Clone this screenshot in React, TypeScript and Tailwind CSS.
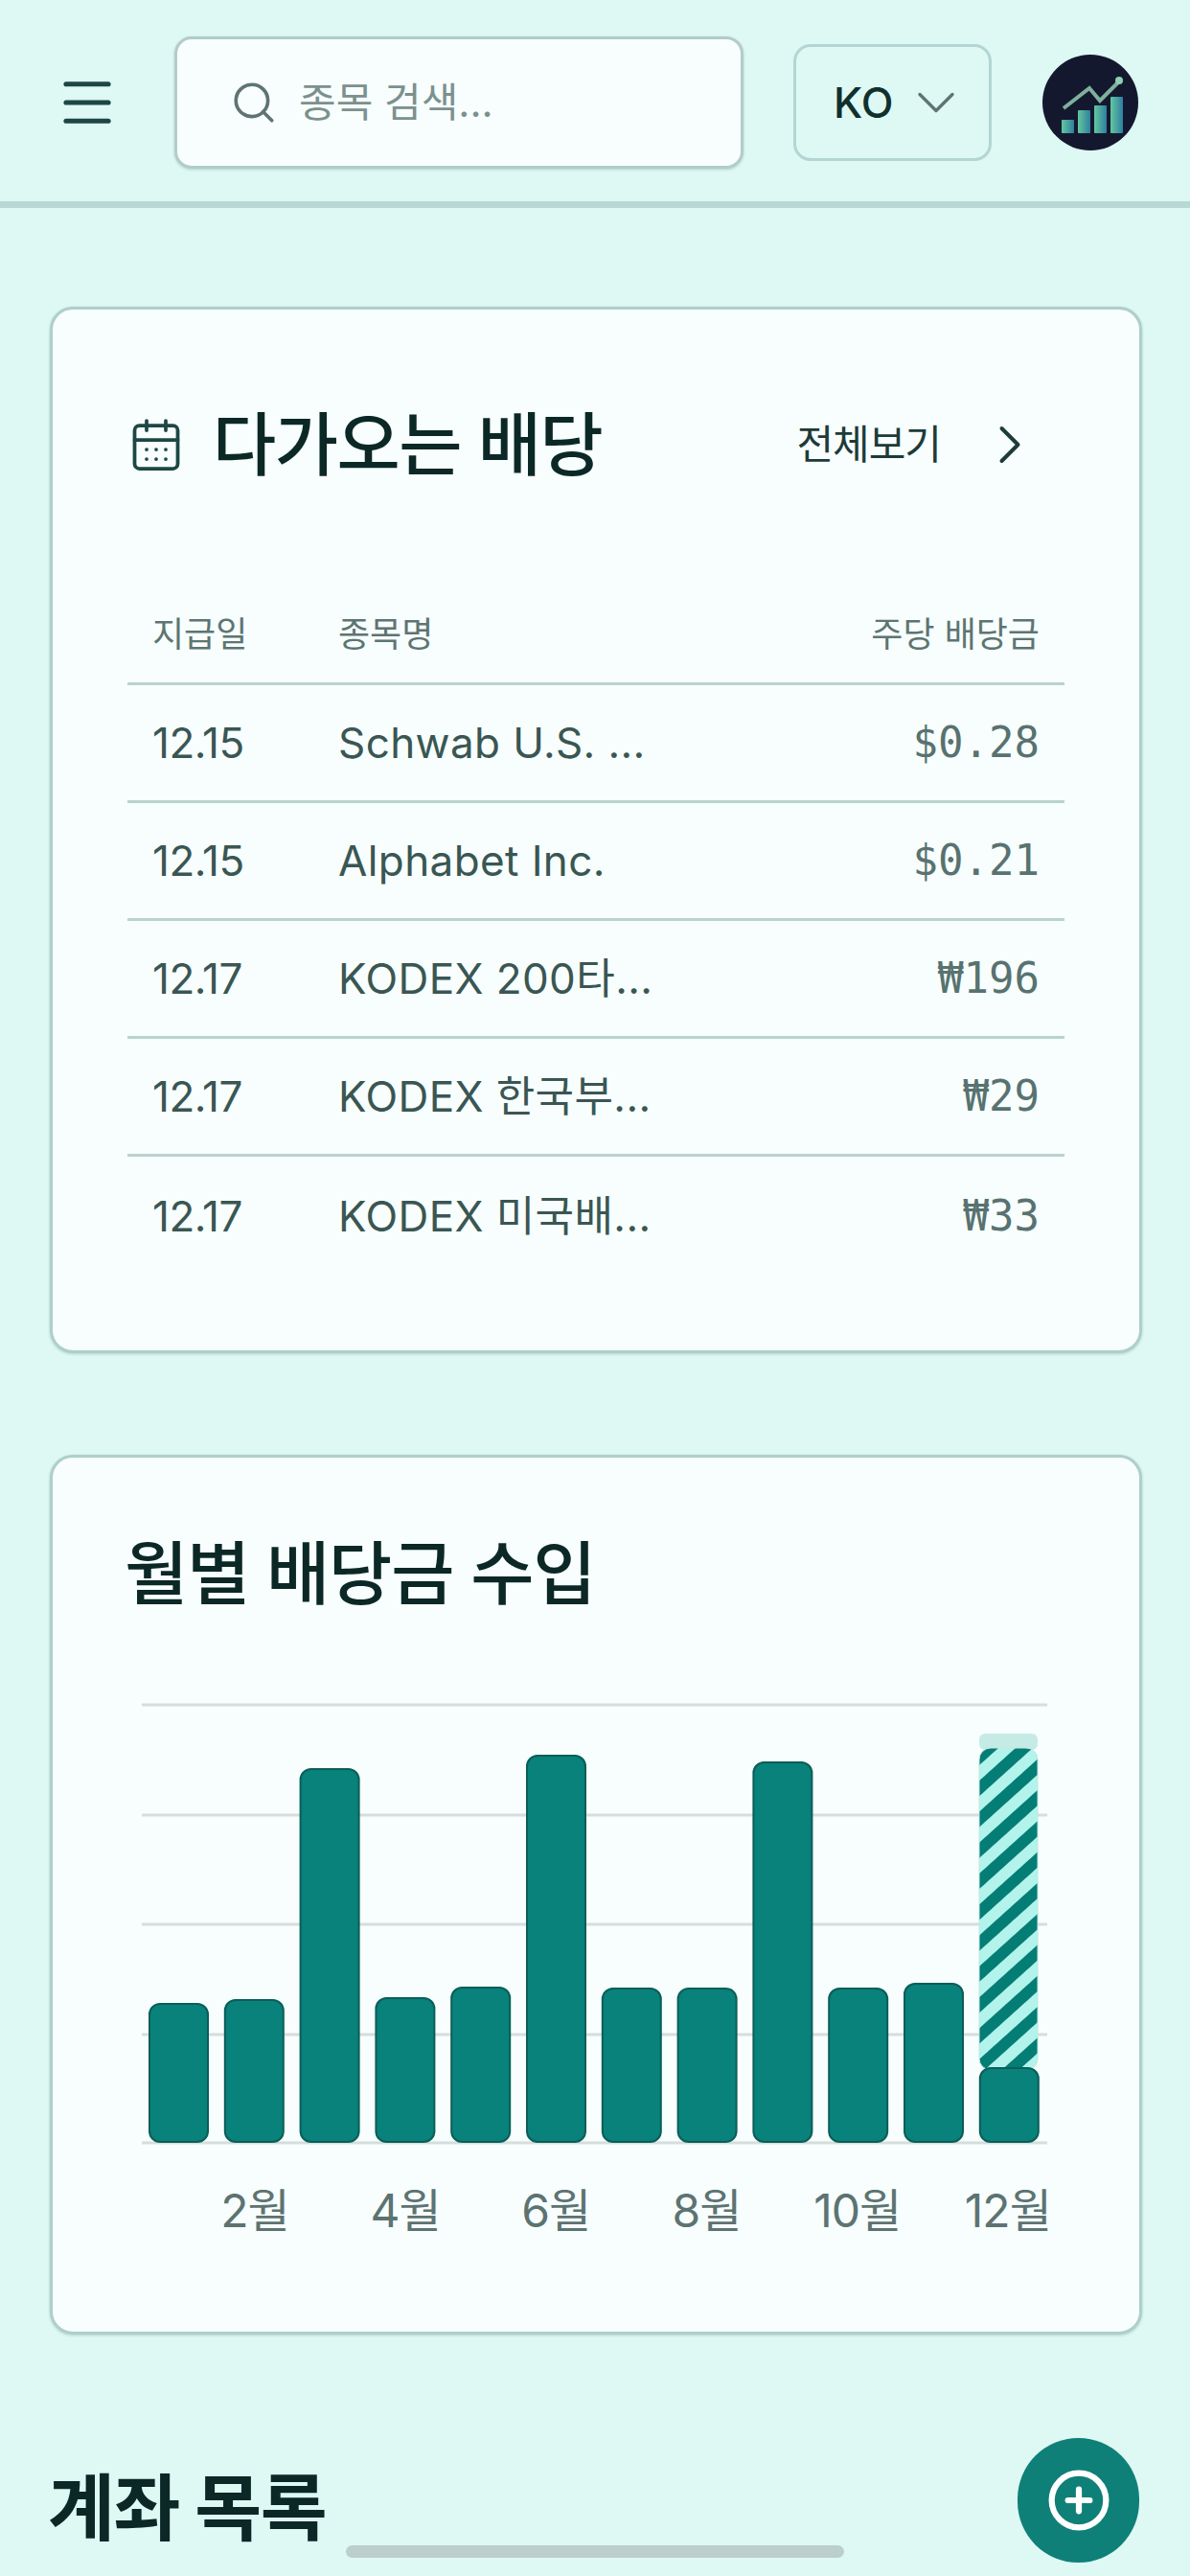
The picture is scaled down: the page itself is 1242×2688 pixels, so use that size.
import React from 'react';
import { CalendarDays, ChevronDown, ChevronRight, CirclePlus, Menu, Search } from 'lucide-react';

interface Dividend {
  date: string;
  name: string;
  amount: string;
}

const dividends: Dividend[] = [
  { date: '12.15', name: 'Schwab U.S. ...', amount: '$0.28' },
  { date: '12.15', name: 'Alphabet Inc.', amount: '$0.21' },
  { date: '12.17', name: 'KODEX 200타...', amount: '₩196' },
  { date: '12.17', name: 'KODEX 한국부...', amount: '₩29' },
  { date: '12.17', name: 'KODEX 미국배...', amount: '₩33' },
];

// bar tops in page pixels, bars all end on the same baseline
const barTops = [2090, 2086, 1845, 2084, 2073, 1831, 2074, 2074, 1838, 2074, 2069, 2157];
const gridLines = [1778, 1893, 2007, 2122, 2235];
const months = ['', '2월', '', '4월', '', '6월', '', '8월', '', '10월', '', '12월'];

const Logo: React.FC = () => (
  <svg viewBox="0 0 100 100" className="w-[100px] h-[102px]">
    <defs>
      <linearGradient id="logoBars" x1="0" x2="1" y1="0" y2="0">
        <stop offset="0" stopColor="#63c79e" />
        <stop offset="1" stopColor="#2f7fa0" />
      </linearGradient>
    </defs>
    <circle cx="50" cy="50" r="50" fill="#14182e" />
    <path d="M22 56 L49 35 L60 48 L79 29" fill="none" stroke="#7fb09c" strokeWidth="4" />
    <circle cx="80" cy="27" r="4" fill="#8fd0b4" />
    <g fill="url(#logoBars)">
      <rect x="20" y="68" width="13" height="14" rx="1" />
      <rect x="37" y="58" width="13" height="24" rx="1" />
      <rect x="54" y="53" width="13" height="29" rx="1" />
      <rect x="71" y="44" width="13" height="38" rx="1" />
    </g>
  </svg>
);

const DividendChart: React.FC = () => (
  <svg viewBox="133 1760 976 490" className="w-[976px] h-[490px] block">
    <defs>
      <pattern id="stripes" patternUnits="userSpaceOnUse" width="24" height="24" patternTransform="rotate(-42)">
        <rect width="24" height="24" fill="#b2f3eb" />
        <rect width="24" height="12" fill="#047d75" />
      </pattern>
    </defs>
    {gridLines.map((y) => (
      <line key={y} x1="148" x2="1093" y1={y} y2={y} stroke="#d5dedc" strokeWidth="3" />
    ))}
    <rect x="1022" y="1808" width="61" height="17" rx="6" fill="#c6ebe6" />
    <rect x="1022" y="1823" width="61" height="336" rx="12" fill="url(#stripes)" stroke="#c0e8e3" strokeWidth="1" />
    {barTops.map((top, i) => (
      <rect
        key={i}
        x={156 + i * 78.8}
        y={top}
        width="61"
        height={2234 - top}
        rx="11"
        fill="#08827a"
        stroke="#0a5e59"
        strokeWidth="2"
      />
    ))}
  </svg>
);

const App: React.FC = () => {
  return (
    <div className="relative w-[1242px] h-[2688px] overflow-hidden bg-[#def8f4] font-['Inter','Noto_Sans_CJK_KR',sans-serif] text-[#10302d]">
      <header className="h-[217px] flex items-center pl-[58px] pr-[54px] pt-[3px] border-b-[7px] border-[#b7d8d4]">
        <Menu className="w-[66px] h-[66px] text-[#1d4744] mr-[58px]" strokeWidth={1.9} />
        <div className="w-[594px] h-[138px] flex items-center pl-[55px] bg-[#f8fefd] border-[3px] border-[#b2ccc9] shadow-[0_1px_3px_rgba(0,60,60,0.2)] rounded-[18px]">
          <Search className="w-[50px] h-[50px] text-[#5f7472]" strokeWidth={1.75} />
          <span className="ml-[22px] text-[42px] leading-[50px] text-[#7b918e]">종목 검색...</span>
        </div>
        <div className="ml-[52px] w-[207px] h-[122px] flex items-center pl-[39px] gap-[11px] border-[3px] border-[#b3d6d2] rounded-[18px]">
          <span className="text-[44px] leading-[50px] font-medium text-[#10302d]">KO</span>
          <ChevronDown className="w-[68px] h-[68px] text-[#5f7472]" strokeWidth={1.2} />
        </div>
        <div className="ml-auto">
          <Logo />
        </div>
      </header>

      <main className="pl-[52px] pr-[50px] pt-[103px] flex flex-col gap-[106px]">
        <section className="h-[1092px] bg-[#f7fefd] border-[3px] border-[#aecfca] shadow-[0_1px_3px_rgba(0,60,60,0.2)] rounded-[24px] px-[78px] pt-[91px]">
          <div className="h-[100px] flex items-center">
            <CalendarDays className="w-[60px] h-[60px] text-[#1d4744]" strokeWidth={1.5} />
            <h2 className="ml-[29px] text-[72px] leading-[100px] font-medium tracking-[-1.5px] text-[#0b2826]">다가오는 배당</h2>
            <span className="ml-auto text-[42px] leading-[60px] tracking-[-1px] text-[#1d3b38]">전체보기</span>
            <ChevronRight className="ml-[38px] mr-[23px] w-[68px] h-[68px] text-[#1d3b38]" strokeWidth={1.4} />
          </div>
          <div className="mt-[106px] h-[95px] pb-[8px] px-[26px] flex items-center justify-between border-b-[3px] border-[#b9d3cf] text-[36px] leading-[50px] text-[#5d7572]">
            <div className="flex">
              <span className="w-[194px]">지급일</span>
              <span>종목명</span>
            </div>
            <span>주당 배당금</span>
          </div>
          {dividends.map((row, i) => (
            <div
              key={i}
              className={`h-[123px] px-[26px] flex items-center justify-between text-[#3a5653] ${i < dividends.length - 1 ? 'border-b-[3px] border-[#b9d3cf]' : ''}`}
            >
              <div className="flex items-center text-[44px] leading-[60px]">
                <span className="w-[194px] tracking-[-0.5px]">{row.date}</span>
                <span className="tracking-[0.4px]">{row.name}</span>
              </div>
              <span className="font-['DejaVu_Sans_Mono','Noto_Sans_CJK_KR',monospace] text-[44px] leading-[60px] text-[#587270]">{row.amount}</span>
            </div>
          ))}
        </section>

        <section className="h-[918px] bg-[#f7fefd] border-[3px] border-[#aecfca] shadow-[0_1px_3px_rgba(0,60,60,0.2)] rounded-[24px] px-[78px] pt-[71px]">
          <h2 className="-ml-[3px] text-[72px] leading-[100px] font-medium tracking-[-1.2px] text-[#0b2826]">월별 배당금 수입</h2>
          <div className="mt-[69px]">
            <DividendChart />
          </div>
          <div className="mt-[26px] pl-[15px] grid grid-cols-[repeat(12,78.6px)] text-[48px] leading-[60px] tracking-[-1px] text-[#5d7372]">
            {months.map((label, i) => (
              <span key={i} className="flex justify-center whitespace-nowrap">{label}</span>
            ))}
          </div>
        </section>

        <h2 className="-ml-[2px] mt-[25px] text-[76px] leading-[100px] font-bold tracking-[-1.5px] text-[#0b2826]">계좌 목록</h2>
      </main>

      <button className="absolute left-[1062px] top-[2544px] w-[127px] h-[130px] rounded-full bg-[#0f8078] flex items-center justify-center">
        <CirclePlus className="w-[68px] h-[68px] text-white" strokeWidth={2.2} />
      </button>
      <div className="absolute left-[361px] top-[2656px] w-[520px] h-[13px] rounded-full bg-[#bccfcc]" />
    </div>
  );
};

export default App;
